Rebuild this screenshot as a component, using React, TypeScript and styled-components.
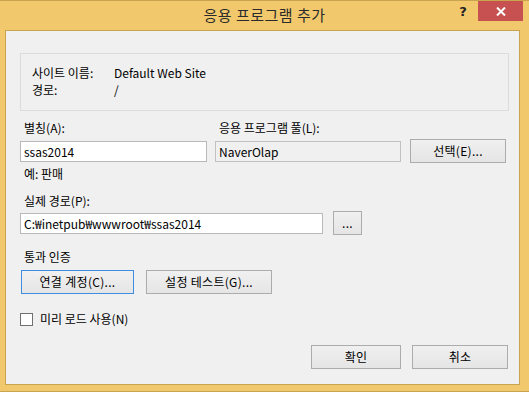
import React from 'react'
import styled, { createGlobalStyle } from 'styled-components'

const GlobalStyle = createGlobalStyle`
  html, body {
    margin: 0;
    padding: 0;
    background: #ffffff;
  }
  body {
    font-family: "Noto Sans CJK KR", "Noto Sans", sans-serif;
    font-size: 12px;
    color: #000000;
  }
`

const Window = styled.div`
  width: 529px;
  height: 392px;
  box-sizing: border-box;
  display: flex;
  flex-direction: column;
  background: #f1c96c;
  border-top: 1px solid #c9a44f;
  border-bottom: 1px solid #c9a44f;
`

const TitleBar = styled.div`
  height: 29px;
  display: grid;
  grid-template-columns: 1fr auto 1fr;
  align-items: start;
`

const Title = styled.div`
  grid-column: 2;
  padding-top: 4px;
  font-size: 15px;
  line-height: 20px;
  color: #2b2b2b;
  letter-spacing: 0.5px;
`

const Controls = styled.div`
  grid-column: 3;
  justify-self: end;
  display: flex;
  align-items: flex-start;
  margin-right: 6px;
`

const HelpButton = styled.div`
  width: 30px;
  height: 20px;
  margin-right: 0;
  display: flex;
  align-items: center;
  justify-content: center;
  font-family: "DejaVu Sans", sans-serif;
  font-weight: bold;
  font-size: 13px;
  color: #222222;
`

const CloseButton = styled.div`
  width: 45px;
  height: 20px;
  display: flex;
  align-items: center;
  justify-content: center;
  background: #c75050;
`

const Client = styled.div`
  flex: 1;
  margin: 0 9px 6px 5px;
  border: 1px solid #c9a44f;
  background: #f0f0f0;
  padding: 22px 10px 0 14px;
  display: flex;
  flex-direction: column;
`

const InfoBox = styled.div`
  height: 58px;
  box-sizing: border-box;
  border: 1px solid #dcdcdc;
  padding: 10px 0 0 11px;
  display: grid;
  grid-template-columns: 82px auto;
  grid-auto-rows: 17px;
  line-height: 17px;
`

const Label = styled.div<{ $top?: number }>`
  margin-top: ${p => p.$top ?? 0}px;
  line-height: 16px;
  padding-left: 4px;
`

const FieldGrid = styled.div`
  display: grid;
  grid-template-columns: 187px 186px 96px;
  column-gap: 8px;
  align-items: center;
`

const FieldRow = styled.div<{ $top?: number }>`
  display: flex;
  align-items: center;
  margin-top: ${p => p.$top ?? 0}px;
`

const TextBox = styled.div<{ $width: number; $readOnly?: boolean }>`
  width: ${p => p.$width}px;
  height: 21px;
  box-sizing: border-box;
  border: 1px solid ${p => (p.$readOnly ? '#c2c2c2' : '#b9b9b9')};
  background: ${p => (p.$readOnly ? '#f0f0f0' : '#ffffff')};
  padding-left: 3px;
  line-height: 19px;
  white-space: nowrap;
  overflow: hidden;
`

const Button = styled.div<{ $width: number; $focused?: boolean; $left?: number }>`
  width: ${p => p.$width}px;
  height: 24px;
  margin-left: ${p => p.$left ?? 0}px;
  box-sizing: border-box;
  border: 1px solid ${p => (p.$focused ? '#3c8fe0' : '#acacac')};
  background: linear-gradient(#f0f0f0, #e5e5e5);
  display: flex;
  align-items: center;
  justify-content: center;
  line-height: 16px;
  letter-spacing: 0.3px;
  white-space: nowrap;
`

const ButtonRow = styled.div<{ $top: number; $end?: boolean }>`
  display: flex;
  justify-content: ${p => (p.$end ? 'flex-end' : 'flex-start')};
  margin-top: ${p => p.$top}px;
  padding-left: ${p => (p.$end ? 0 : 1)}px;
  padding-right: ${p => (p.$end ? 1 : 0)}px;
`

const CheckRow = styled.label`
  display: flex;
  align-items: center;
  gap: 7px;
  margin-top: 17px;
  line-height: 16px;
`

const CheckBox = styled.span`
  width: 13px;
  height: 13px;
  box-sizing: border-box;
  border: 1px solid #707070;
  background: #ffffff;
`

export default function App() {
  return (
    <>
      <GlobalStyle />
      <Window>
        <TitleBar>
          <Title>응용 프로그램 추가</Title>
          <Controls>
            <HelpButton>?</HelpButton>
            <CloseButton>
              <svg width="10" height="9" viewBox="0 0 10 9">
                <path d="M1 0.5 L9 8.5 M9 0.5 L1 8.5" stroke="#ffffff" strokeWidth="2" />
              </svg>
            </CloseButton>
          </Controls>
        </TitleBar>
        <Client>
          <InfoBox>
            <div>사이트 이름:</div>
            <div>Default Web Site</div>
            <div>경로:</div>
            <div>/</div>
          </InfoBox>

          <Label $top={9}>
            <FieldGrid>
              <div>별칭(A):</div>
              <div>응용 프로그램 풀(L):</div>
            </FieldGrid>
          </Label>
          <FieldRow $top={3}>
            <FieldGrid>
              <TextBox $width={187}>ssas2014</TextBox>
              <TextBox $width={186} $readOnly>NaverOlap</TextBox>
              <Button $width={96} $left={1}>선택(E)...</Button>
            </FieldGrid>
          </FieldRow>
          <Label $top={3}>예: 판매</Label>

          <Label $top={11}>실제 경로(P):</Label>
          <FieldRow $top={2}>
            <TextBox $width={303}>C:₩inetpub₩wwwroot₩ssas2014</TextBox>
            <Button $width={29} $left={10}>...</Button>
          </FieldRow>

          <Label $top={14}>통과 인증</Label>
          <ButtonRow $top={5}>
            <Button $width={113} $focused>연결 계정(C)...</Button>
            <Button $width={126} $left={12}>설정 테스트(G)...</Button>
          </ButtonRow>

          <CheckRow>
            <CheckBox />
            미리 로드 사용(N)
          </CheckRow>

          <ButtonRow $top={18} $end>
            <Button $width={90}>확인</Button>
            <Button $width={96} $left={11}>취소</Button>
          </ButtonRow>
        </Client>
      </Window>
    </>
  )
}
